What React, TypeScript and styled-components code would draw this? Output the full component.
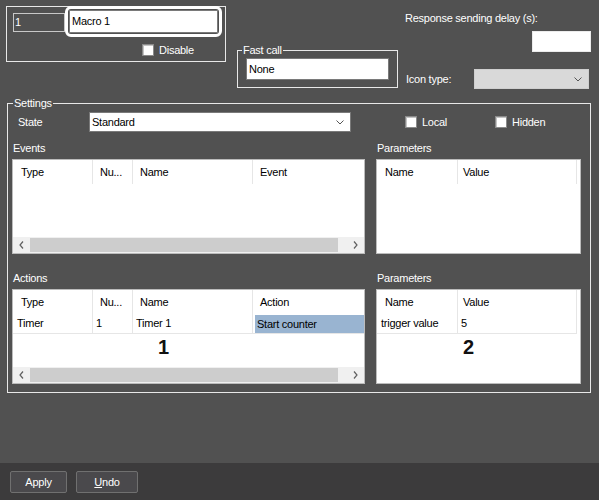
import React from "react";
import styled, { createGlobalStyle } from "styled-components";

const GlobalStyle = createGlobalStyle`
  html, body {
    margin: 0;
    padding: 0;
    background: #515151;
  }
  body {
    font-family: "Liberation Sans", Arial, sans-serif;
    font-size: 11px;
    letter-spacing: -0.25px;
    color: #ffffff;
  }
  * {
    box-sizing: border-box;
  }
`;

const Window = styled.div`
  width: 599px;
  height: 500px;
  display: flex;
  flex-direction: column;
  background: #515151;
  overflow: hidden;
`;

const Main = styled.div`
  flex: 1;
  padding: 6px 0 0 6px;
`;

const TopRow = styled.div`
  display: flex;
  align-items: flex-start;
`;

const PlainGroup = styled.div`
  width: 220px;
  height: 56px;
  border: 1px solid #e8e8e8;
  display: flex;
  flex-direction: column;
`;

const IdRow = styled.div`
  display: flex;
  align-items: flex-start;
`;

const IdField = styled.div`
  margin: 6px 0 0 6px;
  width: 52px;
  height: 19px;
  border: 1px solid #c8c8c8;
  padding-left: 1px;
  line-height: 17px;
`;

const Highlight = styled.div`
  margin-top: -1px;
  border: 3px solid #ffffff;
  border-radius: 6px;
  padding: 1px;
`;

const TextField = styled.div<{ $w: number; $h: number }>`
  width: ${(p) => p.$w}px;
  height: ${(p) => p.$h}px;
  background: #ffffff;
  border: 1px solid #7a7a7a;
  color: #000000;
  padding-left: 2px;
  line-height: ${(p) => p.$h - 2}px;
  white-space: nowrap;
`;

const DisableRow = styled.div`
  margin-top: 6px;
  padding-left: 135px;
  display: flex;
`;

const CheckLabel = styled.label<{ $w?: number }>`
  display: inline-flex;
  align-items: center;
  gap: 5px;
  width: ${(p) => (p.$w ? `${p.$w}px` : "auto")};
  line-height: 14px;
`;

const Box = styled.span`
  width: 12px;
  height: 12px;
  background: #ffffff;
  border: 1px solid #8a8a8a;
  box-shadow: inset 1px 1px 0 #c4c4c4;
  flex-shrink: 0;
`;

const Group = styled.fieldset<{ $w: number; $pad: string; $mt: number; $ml: number }>`
  margin: ${(p) => p.$mt}px 0 0 ${(p) => p.$ml}px;
  width: ${(p) => p.$w}px;
  padding: ${(p) => p.$pad};
  border: 1px solid #e8e8e8;
  min-width: 0;
`;

const Legend = styled.legend<{ $ml: number }>`
  padding: 0 1px;
  margin-left: ${(p) => p.$ml}px;
  line-height: 14px;
  font-size: 11px;
  color: #ffffff;
`;

const RightCol = styled.div`
  margin: 5px 0 0 7px;
  width: 186px;
  display: flex;
  flex-direction: column;
`;

const Label = styled.div`
  line-height: 14px;
  white-space: nowrap;
`;

const DelayInput = styled.div`
  margin-top: 6px;
  align-self: flex-end;
  width: 59px;
  height: 21px;
  background: #ffffff;
  border: 1px solid #ececec;
`;

const IconRow = styled.div`
  margin-top: 17px;
  display: flex;
  align-items: center;
  padding-left: 1px;
`;

const Select = styled.div<{ $w: number; $disabled?: boolean }>`
  margin-left: auto;
  margin-right: 2px;
  width: ${(p) => p.$w}px;
  height: 20px;
  background: ${(p) => (p.$disabled ? "#d9d9d9" : "#ffffff")};
  border: 1px solid ${(p) => (p.$disabled ? "#cfcfcf" : "#7a7a7a")};
  color: #000000;
  display: flex;
  align-items: center;
  justify-content: space-between;
  padding: 0 6px 0 2px;
  line-height: 18px;
`;

const StateRow = styled.div`
  display: flex;
  align-items: center;
  height: 20px;
`;

const StateLabel = styled.div`
  width: 77px;
  padding-left: 6px;
`;

const StateSelect = styled(Select)`
  margin: 0 54px 0 0;
`;

const Panels = styled.div`
  margin-top: 8px;
  display: grid;
  grid-template-columns: 353px 205px;
  column-gap: 11px;
  row-gap: 16px;
`;

const SectionLabel = styled.div`
  line-height: 16px;
  padding-left: 1px;
  margin-bottom: 3px;
`;

const TableFrame = styled.div`
  height: 95px;
  background: #ffffff;
  border: 1px solid #bcbcbc;
  color: #000000;
  display: flex;
  flex-direction: column;
  overflow: hidden;
`;

const Row = styled.div<{ $h: number }>`
  display: flex;
  height: ${(p) => p.$h}px;
  flex-shrink: 0;
`;

const HeadCell = styled.div<{ $w: number; $pl: number }>`
  width: ${(p) => p.$w}px;
  padding-left: ${(p) => p.$pl}px;
  line-height: 24px;
  border-right: 1px solid #e6e6e6;
  white-space: nowrap;
  overflow: hidden;
  flex-shrink: 0;
`;

const Cell = styled.div<{ $w: number; $pl: number }>`
  width: ${(p) => p.$w}px;
  padding-left: ${(p) => p.$pl}px;
  line-height: 19px;
  border-right: 1px solid #e6e6e6;
  border-bottom: 1px solid #e6e6e6;
  white-space: nowrap;
  overflow: hidden;
  flex-shrink: 0;
`;

const SelectedCell = styled.div<{ $w: number }>`
  width: ${(p) => p.$w}px;
  padding: 1px 0 1px 2px;
  border-bottom: 1px solid #e6e6e6;
  flex-shrink: 0;
`;

const Selection = styled.div`
  height: 18px;
  line-height: 18px;
  background: #99b4d1;
  padding-left: 2px;
  white-space: nowrap;
`;

const Annotation = styled.div<{ $pl: number }>`
  margin-top: 3px;
  padding-left: ${(p) => p.$pl}px;
  font-size: 20px;
  font-weight: bold;
  line-height: 20px;
  letter-spacing: 0;
  color: #111111;
`;

const ScrollBar = styled.div`
  margin-top: auto;
  height: 16px;
  display: flex;
  background: #f0f0f0;
  flex-shrink: 0;
`;

const ScrollButton = styled.div`
  width: 17px;
  display: flex;
  align-items: center;
  justify-content: center;
`;

const Thumb = styled.div`
  flex: 1;
  margin: 1px 9px 1px 0;
  background: #cdcdcd;
`;

const BottomBar = styled.div`
  height: 37px;
  background: #3c3b3c;
  display: flex;
  gap: 9px;
  padding: 8px 0 0 10px;
`;

const Button = styled.button<{ $w: number }>`
  width: ${(p) => p.$w}px;
  height: 22px;
  background: #4a494c;
  border: 1px solid #707070;
  border-radius: 2px;
  color: #ffffff;
  font-family: "Liberation Sans", Arial, sans-serif;
  font-size: 11px;
  letter-spacing: -0.25px;
  padding: 0;
`;

const Chevron = () => (
  <svg width="8" height="5" viewBox="0 0 8 5">
    <polyline points="0.5,0.5 4,4 7.5,0.5" fill="none" stroke="#555" strokeWidth="1" />
  </svg>
);

const Arrow = ({ dir }: { dir: "left" | "right" }) => (
  <svg width="5" height="8" viewBox="0 0 5 8">
    <polyline
      points={dir === "left" ? "4,0.5 1,4 4,7.5" : "1,0.5 4,4 1,7.5"}
      fill="none"
      stroke="#606060"
      strokeWidth="1.2"
    />
  </svg>
);

const Scroll = () => (
  <ScrollBar>
    <ScrollButton>
      <Arrow dir="left" />
    </ScrollButton>
    <Thumb />
    <ScrollButton>
      <Arrow dir="right" />
    </ScrollButton>
  </ScrollBar>
);

const objectCols = [
  { w: 80, pl: 8 },
  { w: 40, pl: 7 },
  { w: 120, pl: 7 },
  { w: 120, pl: 7 },
];

const paramCols = [
  { w: 81, pl: 8 },
  { w: 119, pl: 5 },
];

function ObjectHeader({ last }: { last: string }) {
  const titles = ["Type", "Nu...", "Name", last];
  return (
    <Row $h={24}>
      {objectCols.map((c, i) => (
        <HeadCell key={i} $w={c.w} $pl={c.pl}>
          {titles[i]}
        </HeadCell>
      ))}
    </Row>
  );
}

function ParamHeader() {
  return (
    <Row $h={24}>
      <HeadCell $w={paramCols[0].w} $pl={paramCols[0].pl}>
        Name
      </HeadCell>
      <HeadCell $w={paramCols[1].w} $pl={paramCols[1].pl}>
        Value
      </HeadCell>
    </Row>
  );
}

export default function App() {
  return (
    <>
      <GlobalStyle />
      <Window>
        <Main>
          <TopRow>
            <PlainGroup>
              <IdRow>
                <IdField>1</IdField>
                <Highlight>
                  <TextField $w={149} $h={23}>
                    Macro 1
                  </TextField>
                </Highlight>
              </IdRow>
              <DisableRow>
                <CheckLabel>
                  <Box />
                  Disable
                </CheckLabel>
              </DisableRow>
            </PlainGroup>

            <Group $w={161} $pad="1px 8px 7px 8px" $mt={37} $ml={11}>
              <Legend $ml={-4}>Fast call</Legend>
              <TextField $w={143} $h={22}>
                None
              </TextField>
            </Group>

            <RightCol>
              <Label>Response sending delay (s):</Label>
              <DelayInput />
              <IconRow>
                <Label>Icon type:</Label>
                <Select $w={115} $disabled>
                  <span />
                  <Chevron />
                </Select>
              </IconRow>
            </RightCol>
          </TopRow>

          <Group $w={584} $pad="2px 9px 8px 4px" $mt={7} $ml={1}>
            <Legend $ml={1}>Settings</Legend>
            <StateRow>
              <StateLabel>State</StateLabel>
              <StateSelect $w={262}>
                <span>Standard</span>
                <Chevron />
              </StateSelect>
              <CheckLabel $w={90}>
                <Box />
                Local
              </CheckLabel>
              <CheckLabel>
                <Box />
                Hidden
              </CheckLabel>
            </StateRow>

            <Panels>
              <div>
                <SectionLabel>Events</SectionLabel>
                <TableFrame>
                  <ObjectHeader last="Event" />
                  <Scroll />
                </TableFrame>
              </div>
              <div>
                <SectionLabel>Parameters</SectionLabel>
                <TableFrame>
                  <ParamHeader />
                </TableFrame>
              </div>
              <div>
                <SectionLabel>Actions</SectionLabel>
                <TableFrame>
                  <ObjectHeader last="Action" />
                  <Row $h={20}>
                    <Cell $w={80} $pl={4}>
                      Timer
                    </Cell>
                    <Cell $w={40} $pl={3}>
                      1
                    </Cell>
                    <Cell $w={120} $pl={3}>
                      Timer 1
                    </Cell>
                    <SelectedCell $w={120}>
                      <Selection>Start counter</Selection>
                    </SelectedCell>
                  </Row>
                  <Annotation $pl={145}>1</Annotation>
                  <Scroll />
                </TableFrame>
              </div>
              <div>
                <SectionLabel>Parameters</SectionLabel>
                <TableFrame>
                  <ParamHeader />
                  <Row $h={20}>
                    <Cell $w={81} $pl={4}>
                      trigger value
                    </Cell>
                    <Cell $w={119} $pl={3}>
                      5
                    </Cell>
                  </Row>
                  <Annotation $pl={86}>2</Annotation>
                </TableFrame>
              </div>
            </Panels>
          </Group>
        </Main>

        <BottomBar>
          <Button $w={57}>Apply</Button>
          <Button $w={62}>
            <u>U</u>ndo
          </Button>
        </BottomBar>
      </Window>
    </>
  );
}
